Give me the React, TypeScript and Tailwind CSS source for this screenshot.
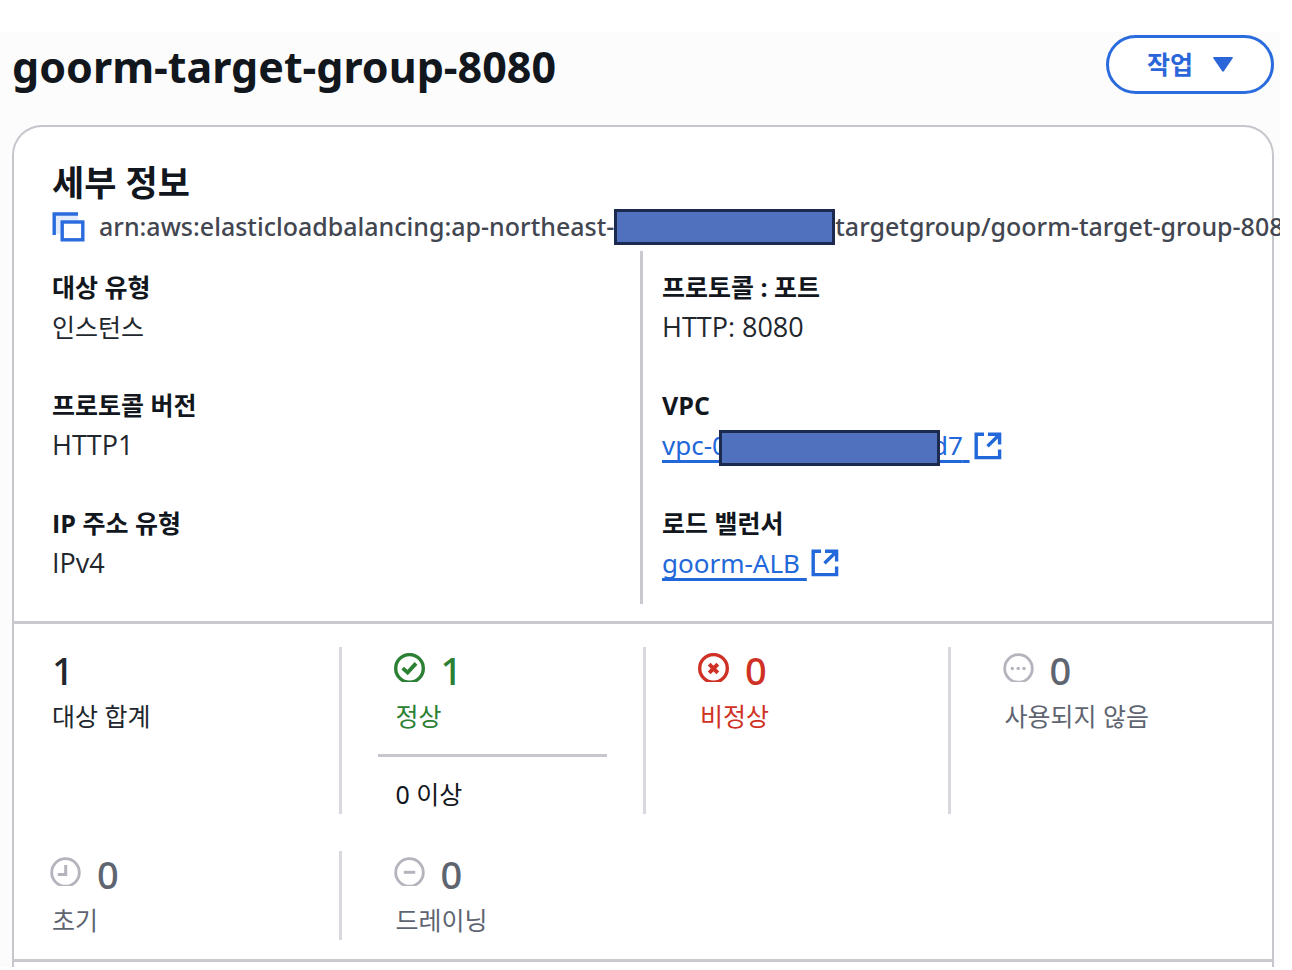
import React from 'react';

type IconName = 'check' | 'error' | 'unused' | 'clock' | 'minus';

const statusShapes: Record<IconName, React.ReactNode> = {
  check: <path d="M8.7 15.2L13.6 19.6L22 10.4" strokeWidth="3.8" />,
  error: <path d="M11.2 11.2L19.8 19.8M19.8 11.2L11.2 19.8" strokeWidth="4" />,
  unused: (
    <g fill="currentColor" stroke="none">
      <circle cx="9.3" cy="15.5" r="1.7" />
      <circle cx="15.2" cy="15.5" r="1.7" />
      <circle cx="21" cy="15.5" r="1.7" />
    </g>
  ),
  clock: <path d="M15.7 8V17.4H7.8" strokeWidth="3" />,
  minus: <path d="M9.8 15.3H21.2" strokeWidth="3" />,
};

const StatusIcon: React.FC<{ name: IconName; thin?: boolean }> = ({ name, thin }) => (
  <svg width="31" height="29" viewBox="0 0 31 29" fill="none" stroke="currentColor" aria-hidden="true">
    <circle cx="15.5" cy="15.4" r="13.8" strokeWidth={thin ? 2.8 : 3.4} />
    {statusShapes[name]}
  </svg>
);

const CopyIcon = () => (
  <svg width="33" height="30" viewBox="0 0 33 30" fill="none" stroke="currentColor" aria-hidden="true">
    <path d="M4 4H26V9H9V22H4Z" fill="#e3ecfb" stroke="none" />
    <path d="M2.2 23V2H26" strokeWidth="3.4" />
    <rect x="10.2" y="10" width="20.6" height="17.8" fill="#fff" strokeWidth="3.4" />
  </svg>
);

const ExternalIcon = () => (
  <svg width="28" height="28" viewBox="0 0 28 28" fill="none" stroke="currentColor" strokeWidth="3.4" aria-hidden="true">
    <path d="M10 2.2H2.2V25.6H25.6V17.5" />
    <path d="M14 2.2H25.6V12.5M25 3L13.5 14.2" />
  </svg>
);

const Redacted: React.FC<{ className?: string }> = ({ className = '' }) => (
  <span className={`inline-block h-9 w-[221px] shrink-0 border-[3px] border-[#1b2a4e] bg-[#4f71be] align-middle ${className}`} />
);

const ExternalLink: React.FC<{ children: React.ReactNode }> = ({ children }) => (
  <a href="#" className="inline-flex h-10 items-center gap-1 font-['Noto_Sans',sans-serif] text-[26px] text-[#2268da]">
    <span className="whitespace-pre underline decoration-[3px] underline-offset-[5px] [text-decoration-skip-ink:none]">
      {children}{' '}
    </span>
    <ExternalIcon />
  </a>
);

const Field: React.FC<{ label: string; latin?: boolean; children: React.ReactNode }> = ({ label, latin, children }) => (
  <div>
    <dt className="h-10 text-[25px] leading-10 font-bold">{label}</dt>
    <dd className={`h-10 leading-10 text-[#22272e] ${latin ? 'text-[27px]' : 'text-[25px]'}`}>{children}</dd>
  </div>
);

interface StatProps {
  count: number;
  label: string;
  icon?: IconName;
  color: string;
  iconColor?: string;
  first?: boolean;
  children?: React.ReactNode;
}

const Stat: React.FC<StatProps> = ({ count, label, icon, color, iconColor = '', first, children }) => (
  <div className={first ? '' : 'border-l-[3px] border-[#d8d8de] px-9'}>
    <div className={`pl-[18px] ${color}`}>
      <div className="flex h-[46px] items-center gap-4 text-[38px] font-medium">
        {icon && (
          <span className={`-ml-0.5 pb-1.5 ${iconColor}`}>
            <StatusIcon name={icon} thin={iconColor !== ''} />
          </span>
        )}
        {count}
      </div>
      <div className="mt-[3px] text-[25px] leading-10">{label}</div>
    </div>
    {children}
  </div>
);

const gray = 'text-[#5f6570]';
const lightGray = 'text-[#b4b4bd]';

const App: React.FC = () => {
  return (
    <div className="bg-white pt-8 pr-3 font-['Noto_Sans','Noto_Sans_CJK_KR',sans-serif] text-[#12161d]">
      <main className="overflow-hidden bg-[#fcfcfd] pt-[3px] pr-1.5 pl-3">
        <header className="flex items-start justify-between">
          <h1 className="text-[43px] leading-[64px] font-bold">goorm-target-group-8080</h1>
          <button
            type="button"
            className="flex h-[59px] items-center gap-5 rounded-full border-[3px] border-[#2a6bdd] bg-white px-[38px] text-[25px] font-bold text-[#2a66d9]"
          >
            작업
            <svg width="20" height="15" viewBox="0 0 20 15" fill="currentColor" aria-hidden="true">
              <path d="M1 0H19Q20.500 0 19.500 1.500L11 14Q10 15.500 9 14L.5 1.500Q-.5 0 1 0Z" />
            </svg>
          </button>
        </header>

        <section className="mt-[26px] rounded-t-[30px] border-2 border-b-0 border-[#c6c6cd] bg-white">
          <div className="pt-8 pr-11 pb-[17px] pl-[38px]">
            <h2 className="text-[35px] leading-[48px] font-bold">세부 정보</h2>
            <div className="flex h-10 items-center text-[25px] font-medium whitespace-nowrap text-[#424650]">
              <button type="button" aria-label="ARN 복사" className="mr-[14px] shrink-0 text-[#2a6bdd]">
                <CopyIcon />
              </button>
              <span>arn:aws:elasticloadbalancing:ap-northeast-</span>
              <Redacted />
              <span>targetgroup/goorm-target-group-8080</span>
            </div>

            <div className="mt-1 grid grid-cols-2 font-['Open_Sans','Noto_Sans_CJK_KR',sans-serif]">
              <dl className="flex flex-col gap-[38px] pt-4 pb-[21px]">
                <Field label="대상 유형">인스턴스</Field>
                <Field label="프로토콜 버전" latin>HTTP1</Field>
                <Field label="IP 주소 유형" latin>IPv4</Field>
              </dl>
              <dl className="flex flex-col gap-[38px] border-l-[3px] border-[#c9c9d0] pt-4 pb-[21px] pl-[19px]">
                <Field label="프로토콜 : 포트" latin>HTTP: 8080</Field>
                <Field label="VPC" latin>
                  <ExternalLink>
                    vpc-0
                    <Redacted className="relative -mr-2 -ml-2" />
                    d7
                  </ExternalLink>
                </Field>
                <Field label="로드 밸런서" latin>
                  <ExternalLink>goorm-ALB</ExternalLink>
                </Field>
              </dl>
            </div>
          </div>

          {/* Target health counts */}
          <div className="grid grid-cols-4 gap-y-[37px] border-y-[3px] border-[#c9c9d0] px-5 pt-[23px] pb-[19px]">
            <Stat first count={1} label="대상 합계" color="text-[#22272e]" />
            <Stat count={1} label="정상" icon="check" color="text-[#2b8034]">
              <hr className="mt-[18px] border-t-[3px] border-[#c6c6cd]" />
              <p className="mt-[17px] pl-[18px] text-[25px] leading-10">0 이상</p>
            </Stat>
            <Stat count={0} label="비정상" icon="error" color="text-[#cf3225]" />
            <Stat count={0} label="사용되지 않음" icon="unused" color={gray} iconColor={lightGray} />
            <Stat first count={0} label="초기" icon="clock" color={gray} iconColor={lightGray} />
            <Stat count={0} label="드레이닝" icon="minus" color={gray} iconColor={lightGray} />
          </div>
          <div className="h-[5px]" />
        </section>
      </main>
    </div>
  );
};

export default App;
